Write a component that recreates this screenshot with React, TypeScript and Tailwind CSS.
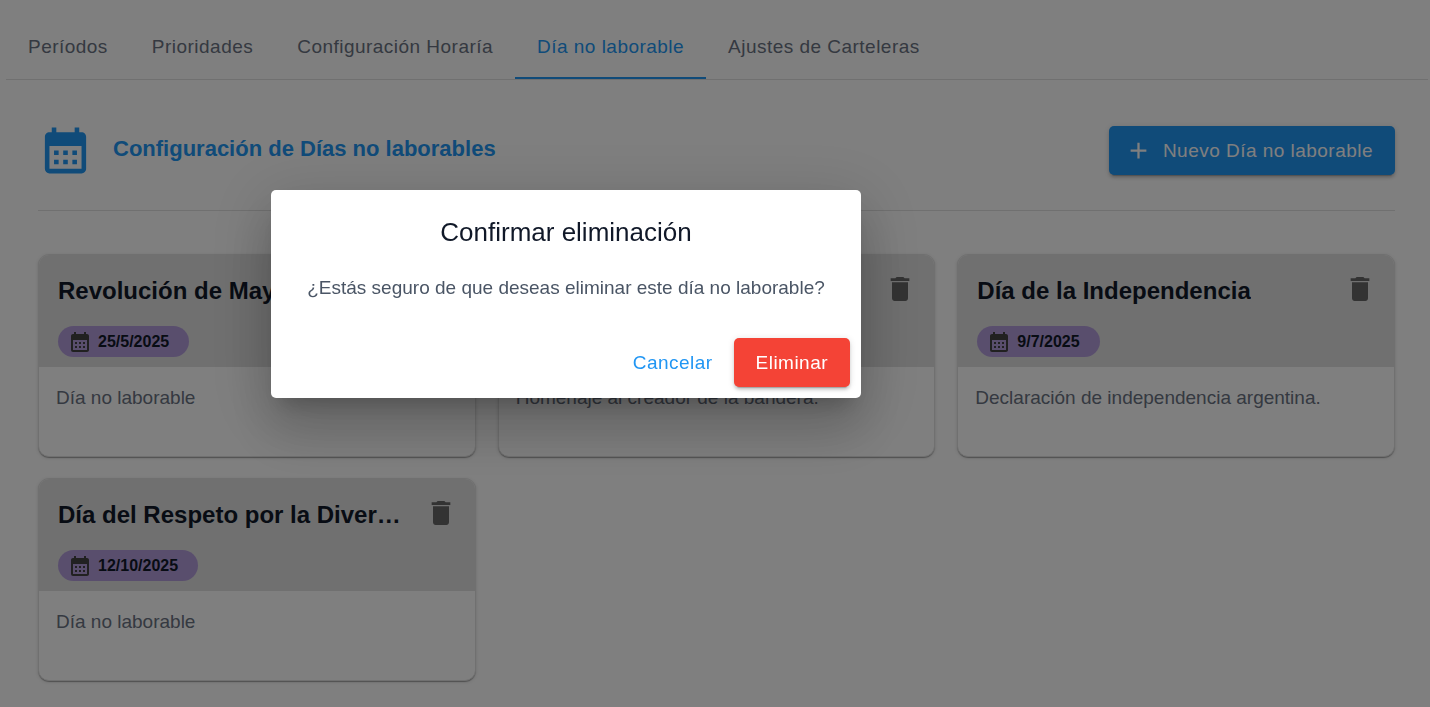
import { MdAdd, MdCalendarMonth, MdDelete } from "react-icons/md";

const tabs = [
  "Períodos",
  "Prioridades",
  "Configuración Horaría",
  "Día no laborable",
  "Ajustes de Carteleras",
];

const activeTab = "Día no laborable";

type Holiday = {
  title: string;
  date: string;
  description: string;
};

const holidays: Holiday[] = [
  { title: "Revolución de Mayo", date: "25/5/2025", description: "Día no laborable" },
  { title: "Día de la Bandera", date: "20/6/2025", description: "Homenaje al creador de la bandera." },
  { title: "Día de la Independencia", date: "9/7/2025", description: "Declaración de independencia argentina." },
  { title: "Día del Respeto por la Diversidad Cultural", date: "12/10/2025", description: "Día no laborable" },
];

function Tabs() {
  return (
    <nav role="tablist" className="flex border-b border-[#e0e0e0] pt-3.5">
      {tabs.map((tab) => (
        <button
          key={tab}
          type="button"
          role="tab"
          aria-selected={tab === activeTab}
          className={
            tab === activeTab
              ? "h-[65px] border-b-2 border-[#2196f3] px-[22px] pt-1 text-[19px] tracking-wide whitespace-nowrap text-[#2196f3]"
              : "h-[65px] px-[22px] pt-0.5 text-[19px] tracking-wide whitespace-nowrap text-gray-500"
          }
        >
          {tab}
        </button>
      ))}
    </nav>
  );
}

function HolidayCard({ title, date, description }: Holiday) {
  return (
    <article className="overflow-hidden rounded-[11px] border border-[#e0e0e0] bg-white shadow-[0_2px_1px_-1px_rgba(0,0,0,0.2),0_1px_1px_rgba(0,0,0,0.14),0_1px_4px_rgba(0,0,0,0.12)]">
      <div className="bg-[#e0e0e0] pt-2.5 pr-2.5 pb-2.5 pl-[19px]">
        <div className="flex items-center justify-between gap-1.5">
          <h2 className="truncate pt-1 text-2xl font-bold text-gray-900">{title}</h2>
          <button type="button" aria-label={`Eliminar ${title}`} className="shrink-0 p-2 text-[#666]">
            <MdDelete className="size-8" />
          </button>
        </div>
        <div className="mt-[13px] inline-flex h-[31px] items-center gap-1.5 rounded-full bg-[#b39ddb] pr-5 pl-2.5 align-top">
          <MdCalendarMonth className="size-6 text-[#424242]" />
          <span className="text-base font-bold text-gray-900">{date}</span>
        </div>
      </div>
      <p className="min-h-[89px] px-[17px] pt-[17px] text-[19px] leading-7 text-gray-500">{description}</p>
    </article>
  );
}

function ConfirmDialog() {
  return (
    <div className="fixed inset-0 flex items-center justify-center bg-black/50 pr-[298px] pb-[119px]">
      <div
        role="dialog"
        aria-modal="true"
        aria-labelledby="confirm-title"
        className="w-[590px] rounded-[5px] bg-white shadow-[0_15px_20px_-10px_rgba(0,0,0,0.2),0_33px_52px_4px_rgba(0,0,0,0.14),0_12px_63px_11px_rgba(0,0,0,0.12)]"
      >
        <h2 id="confirm-title" className="px-8 py-[22px] text-center text-[26px] leading-10 text-gray-900">
          Confirmar eliminación
        </h2>
        <p className="px-8 pb-[25px] text-center text-[19px] leading-7 text-gray-600">
          ¿Estás seguro de que deseas eliminar este día no laborable?
        </p>
        <div className="flex justify-end gap-2.5 p-[11px]">
          <button type="button" className="h-[49px] px-[11px] pt-0.5 text-[19px] tracking-wide text-[#2196f3]">
            Cancelar
          </button>
          <button
            type="button"
            className="h-[49px] rounded-[5px] bg-[#f44336] px-[22px] pt-0.5 text-[19px] tracking-wide text-white shadow-[0_4px_1px_-3px_rgba(0,0,0,0.2),0_3px_3px_rgba(0,0,0,0.14),0_1px_7px_rgba(0,0,0,0.12)]"
          >
            Eliminar
          </button>
        </div>
      </div>
    </div>
  );
}

export default function App() {
  return (
    <div className="min-h-screen bg-white pr-0.5 pl-1.5 font-['Liberation_Sans',Arial,sans-serif]">
      <Tabs />
      <main className="pt-[43px] pr-[33px] pl-8">
        <header className="flex items-center justify-between border-b border-[#e0e0e0] pb-8">
          <div className="flex items-center gap-5">
            <MdCalendarMonth className="size-[55px] text-[#2196f3]" />
            <h1 className="pb-1 text-[22px] font-bold text-[#2196f3]">Configuración de Días no laborables</h1>
          </div>
          <button
            type="button"
            className="flex h-[49px] items-center gap-[11px] rounded-[5px] bg-[#2196f3] pr-[22px] pl-4 text-[19px] tracking-wide text-white shadow-[0_4px_1px_-3px_rgba(0,0,0,0.2),0_3px_3px_rgba(0,0,0,0.14),0_1px_7px_rgba(0,0,0,0.12)]"
          >
            <MdAdd className="size-[27px]" />
            <span className="pt-0.5">Nuevo Día no laborable</span>
          </button>
        </header>
        <section className="mt-[43px] grid grid-cols-3 gap-x-[22px] gap-y-[21px]">
          {holidays.map((holiday) => (
            <HolidayCard key={holiday.date} {...holiday} />
          ))}
        </section>
      </main>
      <ConfirmDialog />
    </div>
  );
}
